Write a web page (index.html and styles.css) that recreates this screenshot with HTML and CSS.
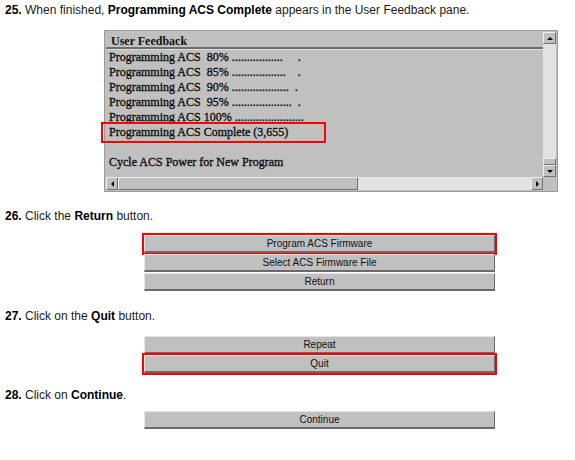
FILE: index.html
```html
<!DOCTYPE html>
<html>
<head>
<meta charset="utf-8">
<link rel="stylesheet" href="styles.css">
</head>
<body>
<div class="page">
  <p class="step s25"><b>25.</b> When finished, <b>Programming ACS Complete</b> appears in the User Feedback pane.</p>

  <div class="pane">
    <div class="pane-main">
      <div class="pane-head">User Feedback</div>
      <div class="pane-list">
        <div class="fb">Programming ACS  80% .................     .</div>
        <div class="fb">Programming ACS  85% ..................    .</div>
        <div class="fb">Programming ACS  90% ...................  .</div>
        <div class="fb">Programming ACS  95% ....................  .</div>
        <div class="fb">Programming ACS 100% .......................</div>
        <div class="fb mark">Programming ACS Complete (3,655)</div>
        <div class="fb"> </div>
        <div class="fb">Cycle ACS Power for New Program</div>
      </div>
    </div>
    <div class="vscroll">
      <div class="sbtn"><span class="tri up"></span></div>
      <div class="vtrack"></div>
      <div class="vthumb"></div>
      <div class="sbtn"><span class="tri down"></span></div>
    </div>
    <div class="hscroll">
      <div class="sbtn h"><span class="tri left"></span></div>
      <div class="hthumb"></div>
      <div class="htrack"></div>
      <div class="sbtn h"><span class="tri right"></span></div>
    </div>
    <div class="corner"></div>
  </div>

  <p class="step s26"><b>26.</b> Click the <b>Return</b> button.</p>
  <div class="btns b26">
    <div class="btn hl">Program ACS Firmware</div>
    <div class="btn">Select ACS Firmware File</div>
    <div class="btn">Return</div>
  </div>

  <p class="step s27"><b>27.</b> Click on the <b>Quit</b> button.</p>
  <div class="btns b27">
    <div class="btn">Repeat</div>
    <div class="btn hl">Quit</div>
  </div>

  <p class="step s28"><b>28.</b> Click on <b>Continue</b>.</p>
  <div class="btns b28">
    <div class="btn">Continue</div>
  </div>
</div>
</body>
</html>
```

FILE: styles.css
```css
html, body {
  margin: 0;
  padding: 0;
  background: #ffffff;
}

.page {
  padding: 3px 0 0 5px;
  font-family: "Liberation Sans", Arial, sans-serif;
  color: #000;
}

.step {
  margin: 0;
  font-size: 12px;
  line-height: 14px;
  color: #1a1a1a;
}

.step b {
  color: #000;
}

.s26 { margin-top: 17px; }
.s27 { margin-top: 18px; }
.s28 { margin-top: 15px; }

/* feedback pane */
.pane {
  margin: 13px 0 0 99px;
  width: 450px;
  height: 158px;
  border: 1px solid #9a9a9a;
  background: #c0c0c0;
  display: grid;
  grid-template-columns: 1fr 13px;
  grid-template-rows: 1fr 13px;
  padding: 1px;
}

.pane-main {
  display: flex;
  flex-direction: column;
  min-width: 0;
  overflow: visible;
}

.pane-head {
  font-family: "Liberation Serif", "Times New Roman", serif;
  font-weight: bold;
  font-size: 12px;
  line-height: 15px;
  padding: 2px 0 0 5px;
  height: 13px;
  border-bottom: 2px solid #6e6e6e;
  margin-bottom: 1px;
  box-shadow: 0 1px 0 #dcdcdc;
  color: #111;
}

.pane-list {
  padding-top: 0;
}

.fb {
  font-family: "Liberation Serif", "Times New Roman", serif;
  font-weight: normal;
  -webkit-text-stroke: 0.35px #111;
  font-size: 12px;
  line-height: 15px;
  height: 15px;
  white-space: pre;
  padding-left: 3px;
  color: #111;
}

.fb.mark {
  width: 214px;
  margin-left: -2px;
  padding-left: 5px;
  outline: 2px solid #ff0000;
  outline-offset: 1px;
}

.vscroll {
  display: flex;
  flex-direction: column;
  background: #e2e2e2;
}

.vtrack {
  flex: 1;
}

.vthumb {
  height: 5px;
  background: #c0c0c0;
  border: 1px solid;
  border-color: #f0f0f0 #707070 #707070 #f0f0f0;
}

.sbtn {
  height: 12px;
  background: #c0c0c0;
  border: 1px solid;
  border-color: #f0f0f0 #707070 #707070 #f0f0f0;
  box-sizing: border-box;
  display: flex;
  align-items: center;
  justify-content: center;
}

.sbtn.h {
  width: 12px;
  height: 13px;
}

.tri {
  width: 0;
  height: 0;
  border: 3px solid transparent;
}
.tri.up { border-bottom: 3px solid #000; border-top: 0; }
.tri.down { border-top: 3px solid #000; border-bottom: 0; }
.tri.left { border-right: 3px solid #000; border-left: 0; }
.tri.right { border-left: 3px solid #000; border-right: 0; }

.hscroll {
  display: flex;
  background: #e2e2e2;
}

.hthumb {
  width: 240px;
  background: #c0c0c0;
  border: 1px solid;
  border-color: #f0f0f0 #707070 #707070 #f0f0f0;
  box-sizing: border-box;
}

.htrack {
  flex: 1;
}

.corner {
  background: #c0c0c0;
}

/* buttons */
.btns {
  margin: 12px 0 0 139px;
  width: 351px;
  display: flex;
  flex-direction: column;
  gap: 1px;
}

.b27 { margin-top: 13px; }
.b28 { margin-top: 9px; }

.btn {
  height: 18px;
  box-sizing: border-box;
  background: #c0c0c0;
  border: 1px solid;
  border-color: #e4e4e4 #6a6a6a #6a6a6a #e4e4e4;
  border-bottom-width: 2px;
  font-family: "Liberation Sans", Arial, sans-serif;
  font-size: 10px;
  line-height: 15px;
  text-align: center;
  color: #111;
}

.btn.hl {
  outline: 2px solid #ff0000;
  outline-offset: 0;
}
```
